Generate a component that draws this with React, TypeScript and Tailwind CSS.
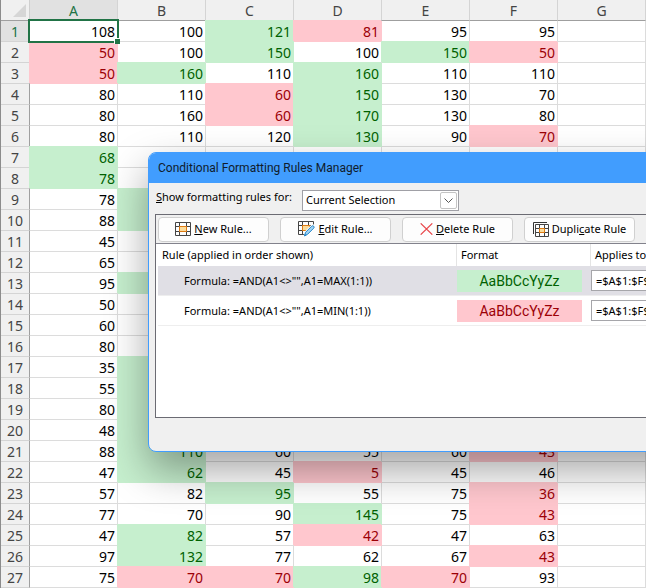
import type { ReactNode } from "react"
import clsx from "clsx"

type Tone = "max" | "min" | null

const columns = ["A", "B", "C", "D", "E", "F", "G"]

// "+" marks the row maximum, "-" the row minimum
const rows = [
  "108 100 121+ 81- 95 95",
  "50- 100 150+ 100 150+ 50-",
  "50- 160+ 110 160+ 110 110",
  "80 110 60- 150+ 130 70",
  "80 160 60- 170+ 130 80",
  "80 110 120 130+ 90 70-",
  "68+",
  "78+",
  "78 +",
  "88 +",
  "45",
  "65",
  "95 +",
  "50",
  "60",
  "80",
  "35 +",
  "55 +",
  "80 +",
  "48 +",
  "88 110+ 60 55 60 43-",
  "47 62+ 45 5- 45 46",
  "57 82 95+ 55 75 36-",
  "77 70 90 145+ 75 43-",
  "47 82+ 57 42- 47 63",
  "97 132+ 77 62 67 43-",
  "75 70- 70- 98+ 70- 93",
].map((line) => line.split(" "))

const cellTone = (raw: string): Tone =>
  raw.endsWith("+") ? "max" : raw.endsWith("-") ? "min" : null

function Cell({ raw, selected }: { raw: string; selected: boolean }) {
  const tone = cellTone(raw)
  return (
    <td
      className={clsx(
        "relative h-[21px] border-r border-b p-0 pt-px pr-[2px] text-right",
        tone === "max" && "border-[#c6efce] bg-[#c6efce] text-[#006100] shadow-[-1px_-1px_0_#c6efce]",
        tone === "min" && "border-[#ffc7ce] bg-[#ffc7ce] text-[#9c0006] shadow-[-1px_-1px_0_#ffc7ce]",
        !tone && "border-[#dcdcdc] bg-white text-black",
        selected && "z-10",
      )}
    >
      {raw.replace(/[+-]/, "")}
      {selected && (
        <>
          <div className="absolute -top-[2px] -right-[2px] -bottom-[2px] -left-[2px] border-2 border-[#217346]" />
          <div className="absolute -right-[3px] -bottom-[3px] size-[6px] border-t border-l border-white bg-[#217346]" />
        </>
      )}
    </td>
  )
}

function Sheet() {
  return (
    <table className="w-[646px] table-fixed border-separate border-spacing-0 border-l border-[#8c8c8c] text-[14px] leading-[19px]">
      <colgroup>
        <col className="w-[29px]" />
        {columns.map((c) => (
          <col key={c} className="w-[88px]" />
        ))}
      </colgroup>
      <thead>
        <tr>
          <th className="h-[21px] border-r border-b border-r-[#cfcfcf] border-b-[#9f9f9f] bg-[#f0f0f0] p-0">
            <svg className="ml-auto mr-[3px] block" width="13" height="13" viewBox="0 0 13 13">
              <path d="M13 0v13H0z" fill="#d6d6d6" />
            </svg>
          </th>
          {columns.map((c) => (
            <th
              key={c}
              scope="col"
              className={clsx(
                "border-r border-b border-r-[#d4d4d4] border-b-[#9f9f9f] p-0 pt-px font-normal",
                c === "A" ? "bg-[#e1e1e1] text-[#217346]" : "bg-[#f0f0f0] text-[#444]",
              )}
            >
              {c}
            </th>
          ))}
        </tr>
      </thead>
      <tbody>
        {rows.map((row, r) => (
          <tr key={r}>
            <th
              scope="row"
              className={clsx(
                "h-[21px] border-r border-b border-r-[#9f9f9f] border-b-[#d4d4d4] p-0 pt-px text-center font-normal",
                r === 0 ? "bg-[#e1e1e1] text-[#217346]" : "bg-[#f0f0f0] text-[#444]",
              )}
            >
              {r + 1}
            </th>
            {columns.map((c, i) => (
              <Cell key={c} raw={row[i] ?? ""} selected={r === 0 && i === 0} />
            ))}
          </tr>
        ))}
      </tbody>
    </table>
  )
}

function NewIcon() {
  return (
    <svg width="16" height="14" viewBox="0 0 16 14" fill="none">
      <path d="M.5.5h15v13H.5zM.5 4.5h15M.5 9.5h15M4.5.5v13M11.5.5v13" stroke="#444" />
      <path d="M4.5 4.5h7v5h-7z" fill="#fbdc9b" stroke="#e07a10" />
    </svg>
  )
}

function EditIcon() {
  return (
    <svg width="17" height="16" viewBox="0 0 17 16" fill="none">
      <path d="M.5 13.5V.5h15v5M.5 4.5h14M.5 9.5h9M.5 13.5h7M4.5.5v13M10.5.5v5" stroke="#444" />
      <path d="M4.5 4.5h7v5h-7z" fill="#fbdc9b" stroke="#e07a10" />
      <path d="M6.5 14.8l1.2-3.8 6.200-6.200a1.400 1.400 0 0 1 2 2L9.900 13z" fill="#fff" stroke="#fff" strokeWidth="2" />
      <path d="M6.500 14.800l1.200-3.600 6-6a1.300 1.300 0 0 1 2 2l-6 6z" fill="#9fd3f5" stroke="#2484c6" />
      <path d="M6 15.300l.8-2.500 1.700 1.700z" fill="#2484c6" />
    </svg>
  )
}

function DeleteIcon() {
  return (
    <svg width="13" height="12" viewBox="0 0 13 12" fill="none">
      <path d="M.7.4l11.600 11.200M12.300.4L.7 11.600" stroke="#e8484c" strokeWidth="1.300" />
    </svg>
  )
}

function DuplicateIcon() {
  return (
    <svg width="16" height="15" viewBox="0 0 16 15" fill="none">
      <path d="M.5 12V.5H14" stroke="#333" />
      <path d="M2.5 2.5h13v12h-13zM2.5 6.5h13M2.5 10.5h13M6.5 2.5v12M11.5 2.5v12" stroke="#444" />
      <path d="M6.5 6.5h5v4h-5z" fill="#fbdc9b" stroke="#e07a10" />
    </svg>
  )
}

function ToolButton({ icon, children }: { icon: ReactNode; children: ReactNode }) {
  return (
    <button
      type="button"
      className="flex h-[25px] w-[111px] items-center justify-center gap-[3px] rounded-[4px] border border-[#d0d0d0] bg-[#fdfdfd] whitespace-nowrap"
    >
      {icon}
      <span>{children}</span>
    </button>
  )
}

const rules = [
  { formula: '=AND(A1<>"",A1=MAX(1:1))', tone: "max", range: "=$A$1:$F$27" },
  { formula: '=AND(A1<>"",A1=MIN(1:1))', tone: "min", range: "=$A$1:$F$27" },
]

function RulesManager() {
  return (
    <div
      role="dialog"
      aria-labelledby="dialog-title"
      className="absolute top-[152px] left-[148px] z-20 w-[680px] overflow-hidden rounded-lg border border-[#419dfe] bg-[#f0f0f0] text-[11px] leading-4 text-black shadow-[0_18px_40px_rgba(0,0,0,0.36)]"
    >
      <h1
        id="dialog-title"
        className="flex h-[30px] items-center bg-[#419dfe] pl-[9px] font-[Roboto,sans-serif] text-[12px] text-[#101c2c]"
      >
        Conditional Formatting Rules Manager
      </h1>
      <div className="px-[6px] pt-[7px] pb-[33px]">
        <div className="flex h-[21px] items-center">
          <label htmlFor="scope" className="w-[147px] pb-[7px] pl-px whitespace-nowrap">
            <u>S</u>how formatting rules for:
          </label>
          <div className="grid w-[157px] items-center">
            <select
              id="scope"
              className="col-start-1 row-start-1 h-[21px] appearance-none border border-[#a0a0a6] bg-white pb-[2px] pl-[3px] text-black"
            >
              <option>Current Selection</option>
            </select>
            <span className="pointer-events-none col-start-1 row-start-1 mr-[2px] flex h-[17px] w-[17px] items-center justify-center justify-self-end rounded-[2px] border border-[#c4c4c4] bg-white">
              <svg width="9" height="5" viewBox="0 0 9 5" fill="none">
                <path d="M.5.5l4 4 4-4" stroke="#555" />
              </svg>
            </span>
          </div>
        </div>
        <div className="mt-[3px] border border-[#6b6b73]">
          <div className="flex h-[28px] items-center gap-[11px] pl-[2px]">
            <ToolButton icon={<NewIcon />}>
              <u>N</u>ew Rule...
            </ToolButton>
            <ToolButton icon={<EditIcon />}>
              <u>E</u>dit Rule...
            </ToolButton>
            <ToolButton icon={<DeleteIcon />}>
              <u>D</u>elete Rule
            </ToolButton>
            <ToolButton icon={<DuplicateIcon />}>
              Dupli<u>c</u>ate Rule
            </ToolButton>
          </div>
          <div className="min-h-[174px] border-t border-[#82828c] bg-white pl-[2px]">
            <table className="w-full table-fixed border-separate border-spacing-0">
              <colgroup>
                <col className="w-[299px]" />
                <col className="w-[134px]" />
                <col />
              </colgroup>
              <thead>
                <tr className="h-[22px] text-left">
                  <th scope="col" className="border-r border-[#e4e4e4] p-0 pl-[4px] font-normal">
                    Rule (applied in order shown)
                  </th>
                  <th scope="col" className="border-r border-[#e4e4e4] p-0 pl-[4px] font-normal">
                    Format
                  </th>
                  <th scope="col" className="p-0 pl-[4px] font-normal">
                    Applies to
                  </th>
                </tr>
              </thead>
              <tbody>
                {rules.map((rule) => (
                  <tr key={rule.tone} className={clsx("h-[30px]", rule.tone === "max" && "bg-[#e0dfe5]")}>
                    <td className="border-b border-[#eeeeee] p-0 pl-[26px] whitespace-nowrap">
                      Formula: {rule.formula}
                    </td>
                    <td className="border-b border-[#eeeeee] p-0">
                      <div
                        className={clsx(
                          "h-[22px] w-[125px] text-center font-[Roboto,sans-serif] text-[14px] leading-[22px]",
                          rule.tone === "max" ? "bg-[#c6efce] text-[#006100]" : "bg-[#ffc7ce] text-[#9c0006]",
                        )}
                      >
                        AaBbCcYyZz
                      </div>
                    </td>
                    <td className="border-b border-[#eeeeee] p-0">
                      <input
                        type="text"
                        aria-label="Applies to"
                        defaultValue={rule.range}
                        className="block h-[21px] w-[150px] border border-[#a6a6aa] bg-white pl-[4px]"
                      />
                    </td>
                  </tr>
                ))}
              </tbody>
            </table>
          </div>
        </div>
      </div>
    </div>
  )
}

export default function App() {
  return (
    <main className="relative min-h-screen overflow-hidden bg-white font-['Noto_Sans','Open_Sans',sans-serif]">
      <Sheet />
      <RulesManager />
    </main>
  )
}
